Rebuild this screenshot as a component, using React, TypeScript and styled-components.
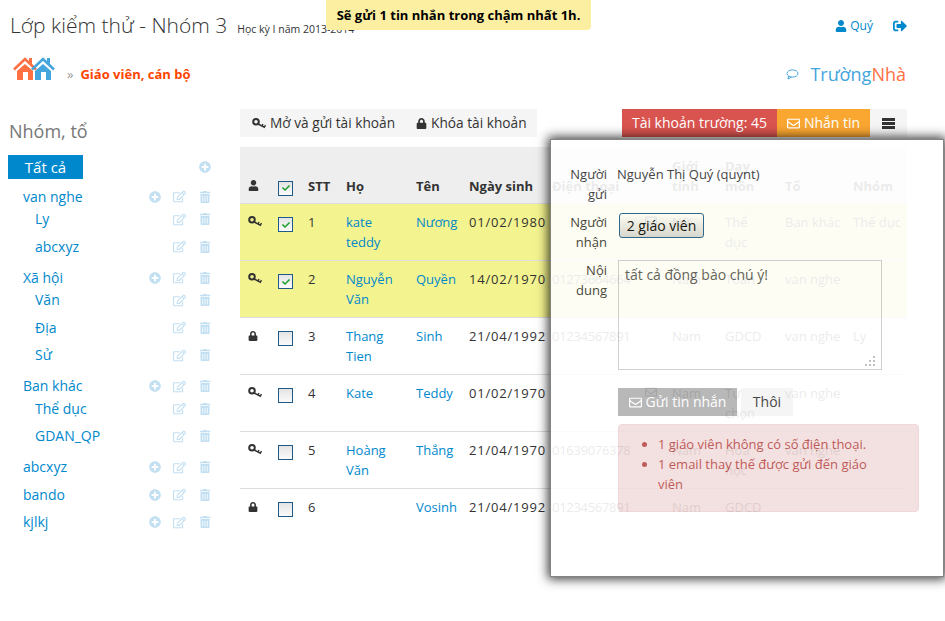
import React from 'react';
import styled, { createGlobalStyle } from 'styled-components';
import {
  FaUser,
  FaSignOutAlt,
  FaRegEnvelope,
  FaLock,
  FaPlusCircle,
  FaRegEdit,
  FaTrashAlt,
  FaCheck,
} from 'react-icons/fa';

const link = '#0088cc';
const text = '#333333';

const GlobalStyle = createGlobalStyle`
  html, body {
    margin: 0;
    padding: 0;
    background: #fff;
  }
  body {
    font-family: "Open Sans", "Liberation Sans", sans-serif;
    font-size: 13px;
    line-height: 20px;
    color: ${text};
  }
`;

const HomeLogo = () => (
  <svg width="43" height="24" viewBox="0 0 43 24">
    <path d="M4 14 L12 7 L20 14 V23 H15 V15 H10 V23 H4 Z" fill="#ff7043" />
    <path d="M1 12.5 L12 2 L23 12.5" fill="none" stroke="#ff7043" strokeWidth="2.6" />
    <rect x="16" y="1" width="3" height="6" fill="#ff7043" />
    <path d="M22 14 L30 7 L38 14 V23 H33 V15 H28 V23 H22 Z" fill="#45a5dd" />
    <path d="M19 12.5 L30 2 L41 12.5" fill="none" stroke="#45a5dd" strokeWidth="2.6" />
    <rect x="34" y="1" width="3" height="6" fill="#45a5dd" />
  </svg>
);

const KeyIcon = () => (
  <svg width="14" height="11" viewBox="0 0 14 11">
    <circle cx="4" cy="3.8" r="2.8" fill="none" stroke="#333" strokeWidth="2" />
    <path d="M6 6 L13 9.5 M10 8 L11 6 M12.5 9 L13.5 7" fill="none" stroke="#333" strokeWidth="1.4" />
  </svg>
);

const BubbleIcon = () => (
  <svg width="13" height="12" viewBox="0 0 13 12">
    <ellipse cx="6.5" cy="5.5" rx="5.5" ry="3.6" fill="none" stroke="#45a5dd" strokeWidth="1" />
    <path d="M2.5 8 L2 11 L5.5 9" fill="none" stroke="#45a5dd" strokeWidth="1" />
  </svg>
);

const BarsIcon = () => (
  <svg width="13" height="11" viewBox="0 0 13 11">
    <path d="M0 0h13v3H0zM0 4h13v3H0zM0 8h13v3H0z" fill="#333" />
  </svg>
);

type Tree = { name: string; children?: string[] };

const groups: Tree[] = [
  { name: 'van nghe', children: ['Ly', 'abcxyz'] },
  { name: 'Xã hội', children: ['Văn', 'Địa', 'Sử'] },
  { name: 'Ban khác', children: ['Thể dục', 'GDAN_QP'] },
  { name: 'abcxyz' },
  { name: 'bando' },
  { name: 'kjlkj' },
];

type Person = {
  locked?: boolean;
  checked?: boolean;
  stt: number;
  ho: string[];
  ten: string;
  birth: string;
  phone?: string;
  mail?: boolean;
  gender: string;
  subject: string[];
  to: string;
  nhom?: string;
};

const people: Person[] = [
  { checked: true, stt: 1, ho: ['kate', 'teddy'], ten: 'Nương', birth: '01/02/1980', mail: true, gender: 'Nữ', subject: ['Thể', 'dục'], to: 'Ban khác', nhom: 'Thể dục' },
  { checked: true, stt: 2, ho: ['Nguyễn', 'Văn'], ten: 'Quyền', birth: '14/02/1970', phone: '01273664664', gender: 'Nam', subject: ['Toán'], to: 'van nghe' },
  { locked: true, stt: 3, ho: ['Thang', 'Tien'], ten: 'Sinh', birth: '21/04/1992', phone: '01234567891', gender: 'Nam', subject: ['GDCD'], to: 'van nghe', nhom: 'Ly' },
  { stt: 4, ho: ['Kate'], ten: 'Teddy', birth: '01/02/1970', mail: true, gender: 'Nam', subject: ['Tự', 'chọn'], to: 'van nghe' },
  { stt: 5, ho: ['Hoàng', 'Văn'], ten: 'Thắng', birth: '21/04/1970', phone: '01639076378', gender: 'Nam', subject: ['Hóa', 'học'], to: 'van nghe' },
  { locked: true, stt: 6, ho: [], ten: 'Vosinh', birth: '21/04/1992', phone: '01234567891', gender: 'Nam', subject: ['GDCD'], to: '' },
];

const App = (): React.ReactElement => {
  return (
    <Page>
      <GlobalStyle />
      <TopBar>
        <TitleWrap>
          <Title>Lớp kiểm thử - Nhóm 3</Title>
          <SubTitle>Học kỳ I năm 2013-2014</SubTitle>
        </TitleWrap>
        <UserLinks>
          <UserLink>
            <FaUser size={12} /> Quý
          </UserLink>
          <FaSignOutAlt size={14} />
        </UserLinks>
      </TopBar>

      <NavBar>
        <Crumbs>
          <LogoWrap>
            <HomeLogo />
          </LogoWrap>
          <CrumbSep>»</CrumbSep>
          <CrumbText>Giáo viên, cán bộ</CrumbText>
        </Crumbs>
        <Brand>
          <BubbleIcon />
          <BrandName>
            Trường<BrandAccent>Nhà</BrandAccent>
          </BrandName>
        </Brand>
      </NavBar>

      <Main>
        <Side>
          <SideTitle>Nhóm, tổ</SideTitle>
          <AllRow>
            <AllButton>Tất cả</AllButton>
            <ActionIcon>
              <FaPlusCircle size={12} />
            </ActionIcon>
          </AllRow>
          {groups.map((group) => (
            <div key={group.name}>
              <TreeRow>
                <GroupName>{group.name}</GroupName>
                <Actions>
                  <ActionIcon>
                    <FaPlusCircle size={12} />
                  </ActionIcon>
                  <ActionIcon>
                    <FaRegEdit size={13} />
                  </ActionIcon>
                  <ActionIcon>
                    <FaTrashAlt size={12} />
                  </ActionIcon>
                </Actions>
              </TreeRow>
              {group.children && (
                <Children>
                  {group.children.map((child) => (
                    <TreeRow key={child}>
                      <ChildName>{child}</ChildName>
                      <Actions>
                        <ActionIcon>
                          <FaRegEdit size={13} />
                        </ActionIcon>
                        <ActionIcon>
                          <FaTrashAlt size={12} />
                        </ActionIcon>
                      </Actions>
                    </TreeRow>
                  ))}
                </Children>
              )}
            </div>
          ))}
        </Side>

        <Content>
          <Toolbar>
            <ToolGroup>
              <ToolButton>
                <KeyIcon /> Mở và gửi tài khoản
              </ToolButton>
              <ToolButton>
                <FaLock size={11} /> Khóa tài khoản
              </ToolButton>
            </ToolGroup>
            <ToolRight>
              <AccountCount>Tài khoản trường: 45</AccountCount>
              <MessageButton>
                <FaRegEnvelope size={13} /> Nhắn tin
              </MessageButton>
              <MenuButton>
                <BarsIcon />
              </MenuButton>
            </ToolRight>
          </Toolbar>

          <Table>
            <colgroup>
              <col width="30" />
              <col width="30" />
              <col width="38" />
              <col width="70" />
              <col width="53" />
              <col width="83" />
              <col width="120" />
              <col width="53" />
              <col width="60" />
              <col width="68" />
              <col width="62" />
            </colgroup>
            <thead>
              <tr>
                <Th>
                  <FaUser size={11} />
                </Th>
                <Th>
                  <CheckBox $checked>
                    <FaCheck size={8} />
                  </CheckBox>
                </Th>
                <Th>STT</Th>
                <Th>Họ</Th>
                <Th>Tên</Th>
                <Th>Ngày sinh</Th>
                <Th>Điện thoại</Th>
                <Th>
                  Giới
                  <br />
                  tính
                </Th>
                <Th>
                  Dạy
                  <br />
                  môn
                </Th>
                <Th>Tổ</Th>
                <Th>Nhóm</Th>
              </tr>
            </thead>
            <tbody>
              {people.map((person) => (
                <Row key={person.stt} $active={!!person.checked}>
                  <Td>{person.locked ? <FaLock size={10} /> : <KeyIcon />}</Td>
                  <Td>
                    <CheckBox $checked={!!person.checked}>
                      {person.checked && <FaCheck size={8} />}
                    </CheckBox>
                  </Td>
                  <Td>{person.stt}</Td>
                  <LinkTd>
                    {person.ho.map((part) => (
                      <div key={part}>{part}</div>
                    ))}
                  </LinkTd>
                  <LinkTd>{person.ten}</LinkTd>
                  <DateTd>{person.birth}</DateTd>
                  <PhoneTd>
                    {person.phone}
                    {person.mail && (
                      <MailMark>
                        <FaRegEnvelope size={12} />
                      </MailMark>
                    )}
                  </PhoneTd>
                  <Td>{person.gender}</Td>
                  <Td>
                    {person.subject.map((part) => (
                      <div key={part}>{part}</div>
                    ))}
                  </Td>
                  <Td>{person.to}</Td>
                  <Td>{person.nhom}</Td>
                </Row>
              ))}
            </tbody>
          </Table>
        </Content>
      </Main>

      <Notice>Sẽ gửi 1 tin nhắn trong chậm nhất 1h.</Notice>

      <Modal>
        <FormRow>
          <FormLabel>Người gửi</FormLabel>
          <div>Nguyễn Thị Quý (quynt)</div>
        </FormRow>
        <FormRow>
          <FormLabel>Người nhận</FormLabel>
          <RecipientButton>2 giáo viên</RecipientButton>
        </FormRow>
        <FormRow>
          <FormLabel>Nội dung</FormLabel>
          <MessageBox>
            tất cả đồng bào chú ý!
            <Grip viewBox="0 0 12 12" width="12" height="12">
              <path d="M9 1h2v2H9zM5 5h2v2H5zM9 5h2v2H9zM1 9h2v2H1zM5 9h2v2H5zM9 9h2v2H9z" fill="#bbb" />
            </Grip>
          </MessageBox>
        </FormRow>
        <ModalActions>
          <SendButton>
            <FaRegEnvelope size={13} /> Gửi tin nhắn
          </SendButton>
          <CancelButton>Thôi</CancelButton>
        </ModalActions>
        <ErrorBox>
          <ErrorList>
            <li>1 giáo viên không có số điện thoại.</li>
            <li>1 email thay thế được gửi đến giáo viên</li>
          </ErrorList>
        </ErrorBox>
      </Modal>
    </Page>
  );
};

export default App;

const Page = styled.div`
  position: relative;
  width: 945px;
  height: 621px;
  overflow: hidden;
`;

const TopBar = styled.div`
  display: flex;
  justify-content: space-between;
  align-items: center;
  height: 52px;
  padding: 0 38px 0 10px;
`;

const TitleWrap = styled.div`
  display: flex;
  align-items: baseline;
  gap: 10px;
  margin-top: -2px;
`;

const Title = styled.h1`
  margin: 0;
  font-size: 21px;
  font-weight: 300;
  line-height: 30px;
`;

const SubTitle = styled.span`
  font-size: 10.5px;
`;

const UserLinks = styled.div`
  display: flex;
  align-items: center;
  gap: 20px;
  color: ${link};
`;

const UserLink = styled.span`
  display: flex;
  align-items: center;
  gap: 3px;
  font-size: 12px;
`;

const NavBar = styled.div`
  display: flex;
  justify-content: space-between;
  align-items: center;
  height: 44px;
  padding: 0 39px 0 13px;
`;

const Crumbs = styled.div`
  display: flex;
  align-items: center;
`;

const LogoWrap = styled.div`
  display: flex;
  margin-top: -10px;
`;

const CrumbSep = styled.span`
  margin: 0 7px 0 11px;
  color: #999;
`;

const CrumbText = styled.span`
  font-weight: 700;
  color: #ff4500;
`;

const Brand = styled.div`
  display: flex;
  align-items: center;
  gap: 11px;
`;

const BrandName = styled.span`
  font-size: 18px;
  font-weight: 400;
  color: #45a5dd;
`;

const BrandAccent = styled.span`
  color: #ff7043;
`;

const Main = styled.div`
  display: flex;
  padding: 13px 38px 0 8px;
`;

const Side = styled.aside`
  width: 203px;
  margin-right: 29px;
`;

const SideTitle = styled.h2`
  margin: 10px 0 12px 1px;
  font-size: 18px;
  font-weight: 400;
  line-height: 24px;
  color: #777;
`;

const AllRow = styled.div`
  display: flex;
  justify-content: space-between;
  align-items: center;
  height: 24px;
  margin-bottom: 4px;
`;

const AllButton = styled.span`
  width: 75px;
  background: ${link};
  color: #fff;
  font-size: 15px;
  line-height: 24px;
  text-align: center;
`;

const TreeRow = styled.div`
  display: flex;
  justify-content: space-between;
  align-items: center;
  height: 27.5px;
`;

const GroupName = styled.span`
  margin-left: 15px;
  font-size: 14px;
  color: ${link};
`;

const ChildName = styled(GroupName)`
  margin-left: 27px;
`;

const Children = styled.div`
  margin: -5px 0 3.5px;
`;

const Actions = styled.div`
  display: flex;
  align-items: center;
  gap: 12px;
`;

const ActionIcon = styled.span`
  display: flex;
  justify-content: center;
  width: 13px;
  color: #c3e0f2;
`;

const Content = styled.div`
  width: 667px;
`;

const Toolbar = styled.div`
  display: flex;
  justify-content: space-between;
  height: 28px;
  margin-bottom: 10px;
`;

const ToolGroup = styled.div`
  display: flex;
  align-items: center;
  gap: 21px;
  width: 297px;
  padding-left: 12px;
  box-sizing: border-box;
  background: #f5f5f5;
`;

const ToolButton = styled.span`
  display: flex;
  align-items: center;
  gap: 4px;
  font-size: 13.7px;
`;

const ToolRight = styled.div`
  display: flex;
`;

const AccountCount = styled.span`
  width: 155px;
  background: #d9534f;
  color: #fff;
  font-size: 14px;
  line-height: 28px;
  text-align: center;
`;

const MessageButton = styled.span`
  display: flex;
  align-items: center;
  justify-content: center;
  gap: 4px;
  width: 93px;
  background: #faa732;
  color: #fff;
  font-size: 14px;
`;

const MenuButton = styled.span`
  display: flex;
  align-items: center;
  justify-content: center;
  width: 37px;
  background: #f5f5f5;
`;

const Table = styled.table`
  width: 667px;
  table-layout: fixed;
  border-collapse: collapse;
  border-spacing: 0;
`;

const Th = styled.th`
  height: 56px;
  padding: 0 0 7px 8px;
  box-sizing: border-box;
  background: #eeeeee;
  border-bottom: 1px solid #dddddd;
  font-size: 13px;
  line-height: 20px;
  font-weight: 700;
  text-align: left;
  vertical-align: bottom;
`;

const Row = styled.tr<{ $active: boolean }>`
  background: ${({ $active }) => ($active ? '#f3f38f' : 'transparent')};

  &:last-child td {
    border-bottom: none;
  }
`;

const Td = styled.td`
  height: 57px;
  padding: 8px 0 8px 8px;
  box-sizing: border-box;
  border-bottom: 1px solid #dddddd;
  vertical-align: top;
`;

const LinkTd = styled(Td)`
  color: ${link};
`;

const DateTd = styled(Td)`
  letter-spacing: 0.8px;
`;

const PhoneTd = styled(Td)`
  letter-spacing: -0.3px;
`;

const CheckBox = styled.span<{ $checked: boolean }>`
  display: inline-flex;
  align-items: center;
  justify-content: center;
  width: 13px;
  height: 13px;
  margin-top: 3px;
  border: 1px solid #1d5a8a;
  background: linear-gradient(#e4e4e4, #fbfbfb);
  color: #1e9e2c;
  vertical-align: middle;
`;

const MailMark = styled.span`
  display: inline-flex;
  margin-left: 93px;
  color: #333;
`;

const Notice = styled.div`
  position: absolute;
  top: 0;
  left: 326px;
  width: 265px;
  height: 30px;
  border-radius: 0 0 4px 4px;
  background: #fcefa1;
  color: #000;
  font-size: 13px;
  font-weight: 700;
  line-height: 31px;
  text-align: center;
`;

/* the whole dialog is see-through, the table shows behind it and its children */
const Modal = styled.div`
  position: absolute;
  top: 139px;
  left: 550px;
  width: 394px;
  height: 438px;
  padding-top: 24px;
  box-sizing: border-box;
  border: 1px solid #777;
  background: #fff;
  opacity: 0.9;
  box-shadow: 0 0 10px 2px rgba(0, 0, 0, 0.85);
`;

const FormRow = styled.div`
  display: flex;
  gap: 10px;
  margin-bottom: 8px;
`;

const FormLabel = styled.div`
  width: 46px;
  margin-left: 10px;
  text-align: right;
`;

const RecipientButton = styled.button`
  align-self: flex-start;
  width: 85px;
  height: 25px;
  margin: 1px 0 0 2px;
  padding: 0;
  border: 1px solid #1d5a8a;
  border-radius: 3px;
  background: linear-gradient(#ffffff, #d4d4d4);
  color: #000;
  font-family: inherit;
  font-size: 14px;
`;

const MessageBox = styled.div`
  position: relative;
  width: 264px;
  height: 110px;
  margin-left: 1px;
  padding: 4px 6px;
  box-sizing: border-box;
  border: 1px solid #ccc;
  font-size: 14px;
  color: #555;
`;

const Grip = styled.svg`
  position: absolute;
  right: 5px;
  bottom: 2px;
`;

const ModalActions = styled.div`
  display: flex;
  gap: 4px;
  margin: 18px 0 8px 67px;
`;

const SendButton = styled.span`
  display: flex;
  align-items: center;
  justify-content: center;
  gap: 4px;
  width: 119px;
  height: 28px;
  background: #b1b1b1;
  color: #fff;
  font-size: 14px;
`;

const CancelButton = styled.span`
  width: 52px;
  background: #f5f5f5;
  font-size: 14px;
  line-height: 28px;
  text-align: center;
`;

const ErrorBox = styled.div`
  width: 301px;
  height: 88px;
  margin-left: 67px;
  box-sizing: border-box;
  padding: 9px 44px 0 0;
  border: 1px solid #eed3d7;
  border-radius: 4px;
  background: #f2dede;
  color: #b94a48;
`;

const ErrorList = styled.ul`
  margin: 0;
  padding-left: 39px;
`;
